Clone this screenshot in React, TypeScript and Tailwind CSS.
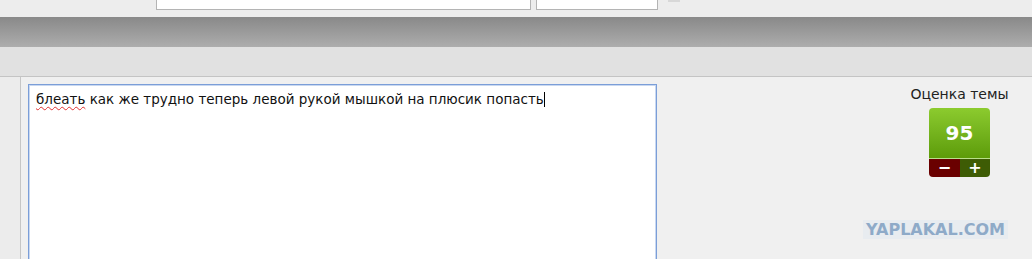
import React from 'react';

export default function App() {
    return (
        <div className="relative w-[1032px] h-[259px] overflow-hidden bg-[#f0f0f0] font-['DejaVu_Sans',sans-serif]">
            {/* top search strip */}
            <div className="h-[17px] bg-[#ededed] flex items-start">
                <div className="ml-[156px] w-[375px] h-[10px] bg-white border border-t-0 border-[#b4b4b4]" />
                <div className="ml-[5px] w-[122px] h-[10px] bg-white border border-t-0 border-[#b4b4b4]" />
                <div className="ml-[10px] w-[12px] h-[2px] bg-[#d8d8d8]" />
            </div>

            {/* gray gradient bar */}
            <div className="h-[30px] bg-linear-to-b from-[#898989] to-[#adadad]" />

            {/* light band */}
            <div className="h-[30px] bg-[#e1e1e1] border-b border-[#c4c4c4]" />

            {/* body */}
            <div className="flex h-[182px]">
                <div className="w-[21px] bg-[#ececec] border-r border-[#c6c6c6]" />
                <div className="flex-1 flex pl-[7px] pt-[7px]">
                    <div className="w-[629px] h-[200px] bg-white border border-[#7b9ed8] shadow-[inset_0_0_0_1px_#c9d8f0] px-[7px] py-[5px] text-[13.5px] text-[#111] leading-[19px]">
                        <span className="underline decoration-wavy decoration-[#e03030] decoration-1 underline-offset-2">блеать</span>{' '}
                        как же трудно теперь левой рукой мышкой на плюсик попасть
                        <span className="inline-block w-px h-[15px] bg-black align-[-3px]" />
                    </div>
                    <div className="ml-auto mr-[42px] w-[61px] flex flex-col items-center pt-[2px]">
                        <div className="text-[14px] text-[#222] leading-[16px] whitespace-nowrap">Оценка темы</div>
                        <div className="mt-[6px] w-[61px] rounded-[4px] overflow-hidden">
                            <div className="h-[51px] bg-linear-to-b from-[#8ccb2e] to-[#5d9c08] border-b border-[#b9e08a] flex items-center justify-center text-white font-bold text-[20px]">
                                95
                            </div>
                            <div className="flex h-[18px] text-white font-bold text-[16px] leading-[18px]">
                                <div className="w-[31px] bg-[#6a0000] flex items-center justify-center">−</div>
                                <div className="flex-1 bg-[#3e5c05] flex items-center justify-center">+</div>
                            </div>
                        </div>
                    </div>
                </div>
            </div>

            {/* watermark */}
            <div className="absolute left-[863px] top-[220px] w-[145px] h-[19px] bg-[#e8ecf0] flex items-center justify-center text-[#8eaac8] font-bold text-[16px] leading-[19px]">
                YAPLAKAL.COM
            </div>
        </div>
    );
}
